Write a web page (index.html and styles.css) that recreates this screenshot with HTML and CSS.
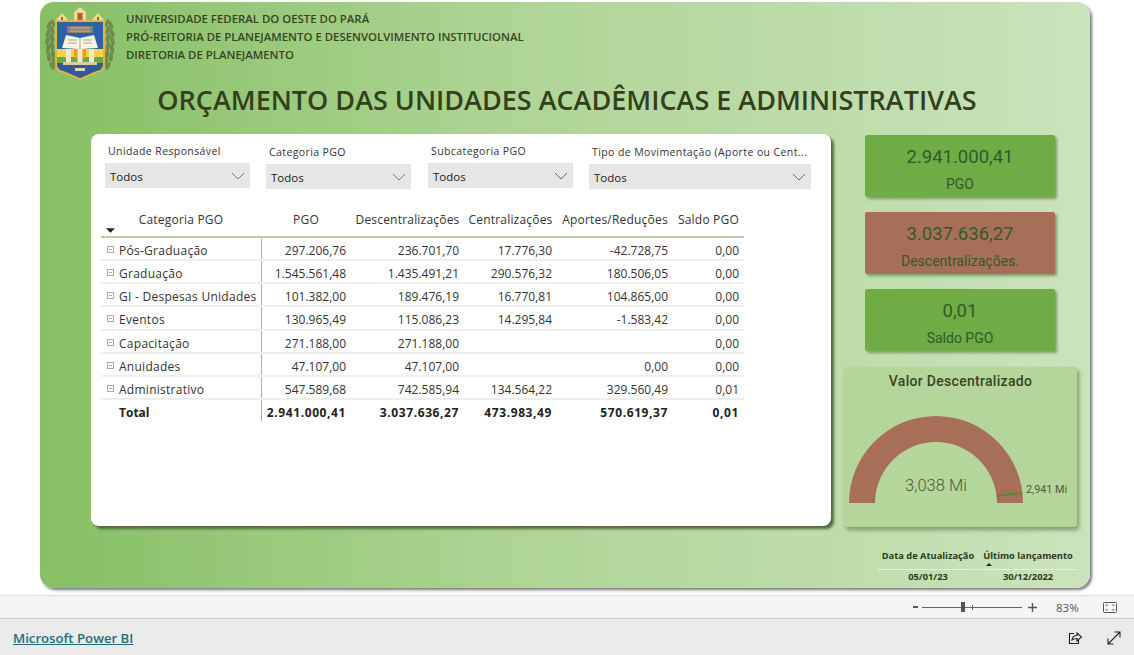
FILE: index.html
```html
<!DOCTYPE html>
<html>
<head>
<title>Orçamento das Unidades</title>
<link rel="stylesheet" href="styles.css">
</head>
<body>
<div class="stage">
<div class="report">
<div class="head">
<svg class="logo" viewBox="0 0 70 74">
<g fill="#6e8b4c">
<ellipse cx="8" cy="16" rx="1.800" ry="4" transform="rotate(-20 8 16)"/><ellipse cx="4" cy="18" rx="1.800" ry="4" transform="rotate(20 4 18)"/>
<ellipse cx="7" cy="23" rx="2" ry="4.500" transform="rotate(-20 7 23)"/><ellipse cx="3" cy="26" rx="2" ry="4.500" transform="rotate(20 3 26)"/>
<ellipse cx="7" cy="31" rx="2" ry="4.500" transform="rotate(-15 7 31)"/><ellipse cx="2.500" cy="34" rx="2" ry="4.500" transform="rotate(15 2.500 34)"/>
<ellipse cx="7" cy="39" rx="2" ry="4.500" transform="rotate(-15 7 39)"/><ellipse cx="3" cy="42" rx="2" ry="4.500" transform="rotate(10 3 42)"/>
<ellipse cx="8" cy="47" rx="2" ry="4.500" transform="rotate(-10 8 47)"/><ellipse cx="4" cy="50" rx="2" ry="4.500" transform="rotate(-5 4 50)"/>
<ellipse cx="9" cy="55" rx="2" ry="4.500" transform="rotate(-20 9 55)"/><ellipse cx="7" cy="59" rx="2" ry="4" transform="rotate(-25 7 59)"/>
<ellipse cx="62" cy="16" rx="1.800" ry="4" transform="rotate(20 62 16)"/><ellipse cx="66" cy="18" rx="1.800" ry="4" transform="rotate(-20 66 18)"/>
<ellipse cx="63" cy="23" rx="2" ry="4.500" transform="rotate(20 63 23)"/><ellipse cx="67" cy="26" rx="2" ry="4.500" transform="rotate(-20 67 26)"/>
<ellipse cx="63" cy="31" rx="2" ry="4.500" transform="rotate(15 63 31)"/><ellipse cx="67.500" cy="34" rx="2" ry="4.500" transform="rotate(-15 67.500 34)"/>
<ellipse cx="63" cy="39" rx="2" ry="4.500" transform="rotate(15 63 39)"/><ellipse cx="67" cy="42" rx="2" ry="4.500" transform="rotate(-10 67 42)"/>
<ellipse cx="62" cy="47" rx="2" ry="4.500" transform="rotate(10 62 47)"/><ellipse cx="66" cy="50" rx="2" ry="4.500" transform="rotate(5 66 50)"/>
<ellipse cx="61" cy="55" rx="2" ry="4.500" transform="rotate(20 61 55)"/><ellipse cx="63" cy="59" rx="2" ry="4" transform="rotate(25 63 59)"/>
</g>
<path d="M35 0l6 5v8H29V5z" fill="#f0d98e"/><path d="M32.500 6h5v7h-5z" fill="#a6603a"/>
<path d="M17 6l6 7H11zM53 6l6 7H47z" fill="#f0d98e"/><path d="M16 10h2v3h-2zM52 10h2v3h-2z" fill="#a6603a"/>
<path d="M10 13h50v44q0 8-8 9l-17 7-17-7q-8-1-8-9z" fill="#e3b63a"/>
<path d="M12 15h46v41q0 7-7 8l-16 7-16-7q-7-1-7-8z" fill="#2c62a8"/>
<path d="M12 42h46v14H12z" fill="#f6d44a"/>
<path d="M12 50h46v7H12z" fill="#6aa84f"/>
<path d="M12 56h46q0 7-7 8l-16 7-16-7q-7-1-7-8z" fill="#2f5a94"/>
<path d="M22 19h26v7H22z" fill="#8b7f70"/><path d="M25 21h20M25 24h20" stroke="#d8cfa8" stroke-width=".7"/>
<path d="M29 39a6 6 0 0 1 12 0v12H29z" fill="#f29a1d"/>
<path d="M17 41l4-13 14 3 14-3 4 13-18 1z" fill="#f7f4e0"/>
<path d="M23 33h9M23 36h9M38 33h9M38 36h9" stroke="#8c8c74" stroke-width=".7"/>
<path d="M35 31v11" stroke="#b7a97a"/>
<path d="M21 42h5v13h-5zM32.500 42h5v13h-5zM44 42h5v13h-5z" fill="#efe9cc"/>
<path d="M18 55h34v3H18z" fill="#d8d0a4"/>
<path d="M30 61h10v3H30z" fill="#d8d7c4"/>
</svg>
<div class="orgs">
<div>UNIVERSIDADE FEDERAL DO OESTE DO PARÁ</div>
<div>PRÓ-REITORIA DE PLANEJAMENTO E DESENVOLVIMENTO INSTITUCIONAL</div>
<div>DIRETORIA DE PLANEJAMENTO</div>
</div>
</div>
<h1 class="title">ORÇAMENTO DAS UNIDADES ACADÊMICAS E ADMINISTRATIVAS</h1>
<div class="main">
<div class="panel">
<div class="slicers">
<div class="slicer s1"><div class="slabel">Unidade Responsável</div><div class="sbox">Todos<svg class="chev" viewBox="0 0 14 8"><path d="M1 1l6 6 6-6" fill="none" stroke="#8a7a3c"/></svg></div></div>
<div class="slicer s1 low"><div class="slabel">Categoria PGO</div><div class="sbox">Todos<svg class="chev" viewBox="0 0 14 8"><path d="M1 1l6 6 6-6" fill="none" stroke="#a8743c"/></svg></div></div>
<div class="slicer s1 wide-gap"><div class="slabel">Subcategoria PGO</div><div class="sbox">Todos<svg class="chev" viewBox="0 0 14 8"><path d="M1 1l6 6 6-6" fill="none" stroke="#3c78a8"/></svg></div></div>
<div class="slicer s2 low"><div class="slabel">Tipo de Movimentação (Aporte ou Cent...</div><div class="sbox">Todos<svg class="chev" viewBox="0 0 14 8"><path d="M1 1l6 6 6-6" fill="none" stroke="#a85050"/></svg></div></div>
</div>
<div class="matrix">
<svg class="sort" viewBox="0 0 10 5"><path d="M0 0h10L5 5z" fill="#222"/></svg>
<table>
<thead>
<tr><th class="cat">Categoria PGO</th><th>PGO</th><th>Descentralizações</th><th>Centralizações</th><th>Aportes/Reduções</th><th>Saldo PGO</th></tr>
</thead>
<tbody>
<tr><td class="cat"><i class="exp"></i>Pós-Graduação</td><td>297.206,76</td><td>236.701,70</td><td>17.776,30</td><td>-42.728,75</td><td>0,00</td></tr>
<tr><td class="cat"><i class="exp"></i>Graduação</td><td>1.545.561,48</td><td>1.435.491,21</td><td>290.576,32</td><td>180.506,05</td><td>0,00</td></tr>
<tr><td class="cat"><i class="exp"></i>GI - Despesas Unidades</td><td>101.382,00</td><td>189.476,19</td><td>16.770,81</td><td>104.865,00</td><td>0,00</td></tr>
<tr class="tall"><td class="cat"><i class="exp"></i>Eventos</td><td>130.965,49</td><td>115.086,23</td><td>14.295,84</td><td>-1.583,42</td><td>0,00</td></tr>
<tr><td class="cat"><i class="exp"></i>Capacitação</td><td>271.188,00</td><td>271.188,00</td><td></td><td></td><td>0,00</td></tr>
<tr><td class="cat"><i class="exp"></i>Anuidades</td><td>47.107,00</td><td>47.107,00</td><td></td><td>0,00</td><td>0,00</td></tr>
<tr><td class="cat"><i class="exp"></i>Administrativo</td><td>547.589,68</td><td>742.585,94</td><td>134.564,22</td><td>329.560,49</td><td>0,01</td></tr>
<tr class="total"><td class="cat"><i class="noexp"></i>Total</td><td>2.941.000,41</td><td>3.037.636,27</td><td>473.983,49</td><td>570.619,37</td><td>0,01</td></tr>
</tbody>
</table>
</div>
</div>
<div class="side">
<div class="card"><div class="num">2.941.000,41</div><div class="cap">PGO</div></div>
<div class="card brown"><div class="num">3.037.636,27</div><div class="cap">Descentralizações.</div></div>
<div class="card"><div class="num">0,01</div><div class="cap">Saldo PGO</div></div>
<div class="gauge">
<div class="gtitle">Valor Descentralizado</div>
<svg class="gsvg" viewBox="0 0 233 130">
<path d="M5 106a87 87 0 0 1 174 0h-26a61 61 0 0 0-122 0z" fill="#a86f58"/>
<path d="M153 99L178 96" stroke="#4f8a32" stroke-width="1.6"/>
<text x="92" y="94" class="gval">3,038 Mi</text>
<text x="182" y="96" class="gtarget">2,941 Mi</text>
</svg>
</div>
<div class="dates">
<div class="dhead">Data de Atualização</div>
<div class="dhead second">Último lançamento<svg class="dsort" viewBox="0 0 6 3"><path d="M0 3h6L3 0z" fill="#222"/></svg></div>
<div class="dval">05/01/23</div>
<div class="dval">30/12/2022</div>
</div>
</div>
</div>
</div>
</div>
<div class="zoombar">
<span class="minus"></span>
<div class="slider"><i class="thumb"></i><i class="mark"></i></div>
<svg class="plus" viewBox="0 0 9 9"><path d="M4.500 0v9M0 4.500h9" stroke="#555" stroke-width="1.400"/></svg>
<span class="pct">83%</span>
<svg class="fit" viewBox="0 0 14 11"><rect x=".5" y=".5" width="13" height="10" rx="1" fill="none" stroke="#555"/><path d="M3 4V3h2M9 3h2v1M11 7v1H9M5 8H3V7" fill="none" stroke="#555" stroke-width=".8"/></svg>
</div>
<div class="footer">
<a class="pbi" href="#">Microsoft Power BI</a>
<div class="ficons">
<svg class="ficon" viewBox="0 0 14 14"><path d="M6 2.500H1.500v10h9V9" fill="none" stroke="#222" stroke-width="1.100"/><path d="M4 9q.5-4.500 5-4.500V2l4.500 4-4.500 4V7.500q-3 0-5 1.500z" fill="none" stroke="#222" stroke-width="1.100"/></svg>
<svg class="ficon" viewBox="0 0 14 14"><path d="M1 13L13 1M7.500 1H13v5.500M1 7.500V13h5.500" fill="none" stroke="#222" stroke-width="1.100"/></svg>
</div>
</div>
</body>
</html>
```

FILE: styles.css
```css
body{
margin:0;
height:655px;
overflow:hidden;
background-color:#fff;
color:#333;
font-family:"Open Sans","Noto Sans",sans-serif;
}
.stage{
height:595px;
box-sizing:border-box;
padding:2px 44px 0 40px;
}
.report{
height:586px;
box-sizing:border-box;
padding:3px 0 0 5px;
border-radius:14px;
background:linear-gradient(90deg,#86bf64 0%,#aed495 45%,#cbe3bd 100%);
box-shadow:2px 2px 3px #777;
}
.head{
display:flex;
height:74px;
}
.logo{
width:70px;
height:74px;
margin:2px 11px 0 0;
}
.orgs{
padding-top:5px;
font-size:11.400px;
font-weight:600;
line-height:18px;
color:#37451f;
white-space:nowrap;
}
.title{
margin:1px 0 0 0;
padding-left:5px;
font-size:27px;
font-weight:600;
line-height:40px;
color:#343f1b;
text-align:center;
width:1034px;
white-space:nowrap;
}
.main{
display:flex;
margin:14px 0 0 46px;
}
.panel{
width:740px;
height:392px;
background-color:#fff;
border-radius:8px;
box-shadow:3px 3px 3px #4f6b3c;
box-sizing:border-box;
padding:8px 0 0 14px;
}
.slicers{
display:flex;
height:47px;
}
.slicer{
margin-right:16px;
}
.s1{width:145px;}
.s2{width:222px;}
.low{margin-top:1px;}
.wide-gap{margin-left:1px;}
.slabel{
height:21px;
padding-left:3px;
font-size:10.500px;
line-height:18px;
letter-spacing:.4px;
color:#333;
white-space:nowrap;
}
.sbox{
display:flex;
justify-content:space-between;
align-items:center;
height:25px;
padding:2px 4px 0 5px;
box-sizing:border-box;
background-color:#e6e6e6;
font-size:11.500px;
color:#222;
}
.chev{
width:14px;
height:8px;
margin:-2px 1px 0 0;
}
.matrix{
position:relative;
margin:11px 0 0 -4px;
}
.sort{
position:absolute;
left:5px;
top:28px;
width:9px;
height:5px;
}
table{
border-collapse:collapse;
table-layout:fixed;
width:643px;
}
th{
height:32px;
padding:4px 0 0 0;
font-size:12px;
font-weight:400;
line-height:32px;
letter-spacing:.2px;
text-align:center;
color:#333;
white-space:nowrap;
border-bottom:2px solid #b9cfa9;
}
th:nth-child(1){width:160px;}
th:nth-child(2){width:90px;}
th:nth-child(3){width:113px;}
th:nth-child(4){width:93px;}
th:nth-child(5){width:116px;}
th:nth-child(6){width:71px;}
td{
height:17px;
padding:4px 5px 0 0;
font-size:12px;
line-height:17px;
text-align:right;
vertical-align:top;
color:#333;
white-space:nowrap;
border-bottom:2px solid #eee;
}
td.cat{
text-align:left;
padding-left:6px;
letter-spacing:.27px;
border-right:1px solid #a9b899;
}
.tall td{height:18px;}
.exp{
display:inline-block;
width:5px;
height:5px;
margin:0 5px 2px 0;
border:1px solid #aaa;
background:linear-gradient(#aaa,#aaa) center/3px 1px no-repeat;
}
.noexp{
display:inline-block;
width:7px;
margin-right:5px;
}
.total td{
font-weight:700;
color:#222;
letter-spacing:.6px;
border-bottom:none;
}
.total td.cat{letter-spacing:0;}
.side{
width:233px;
margin:1px 0 0 13px;
}
.card{
width:190px;
height:62px;
margin:0 0 15px 21px;
box-sizing:border-box;
padding-top:9px;
background-color:#6fac45;
border-radius:2px;
box-shadow:2px 2px 3px #7d9c68;
color:#2f5a2c;
text-align:center;
font-family:Roboto,"Liberation Sans",sans-serif;
}
.brown{background-color:#a86f58;}
.num{
font-size:18.500px;
line-height:26px;
}
.cap{
font-size:14px;
line-height:28px;
}
.gauge{
height:160px;
margin-top:16px;
background-color:#b5d69b;
border-radius:3px;
box-shadow:2px 3px 4px #7d9c68;
}
.gtitle{
height:30px;
font-family:Roboto,"Liberation Sans",sans-serif;
font-size:14px;
font-weight:500;
line-height:28px;
letter-spacing:.3px;
text-align:center;
color:#37451f;
}
.gsvg{
display:block;
width:233px;
height:130px;
}
.gval{
font-family:Roboto,sans-serif;
font-weight:300;
font-size:16.500px;
fill:#4a5a3a;
text-anchor:middle;
}
.gtarget{
font-family:Roboto,sans-serif;
font-size:10.800px;
fill:#4a5a3a;
}
.dates{
display:grid;
grid-template-columns:100px 100px;
margin:22px 0 0 34px;
width:200px;
font-size:9.300px;
font-weight:700;
color:#2c3a1c;
}
.dhead{
position:relative;
height:20px;
line-height:14px;
text-align:center;
white-space:nowrap;
border-bottom:1px solid #e6f0df;
}
.dsort{
position:absolute;
left:8px;
top:14px;
width:6px;
height:3px;
}
.dval{
line-height:14px;
text-align:center;
}
.zoombar{
display:flex;
align-items:center;
height:22px;
border-top:1px solid #ddd;
border-bottom:1px solid #ccc;
background-color:#f5f5f5;
padding-left:913px;
}
.minus{
width:5px;
height:2px;
background-color:#555;
margin-right:4px;
}
.slider{
position:relative;
width:100px;
height:1px;
background-color:#666;
margin-right:6px;
}
.thumb{
position:absolute;
left:39px;
top:-5px;
width:4px;
height:10px;
background-color:#555;
}
.mark{
position:absolute;
left:50px;
top:-2px;
width:1px;
height:5px;
background-color:#666;
}
.plus{
width:9px;
height:9px;
margin-right:19px;
}
.pct{
width:24px;
font-size:11.500px;
color:#555;
margin-right:23px;
}
.fit{
width:14px;
height:11px;
}
.footer{
display:flex;
justify-content:space-between;
align-items:center;
height:37px;
padding:0 13px;
background-color:#eaeaea;
}
.pbi{
font-size:13.200px;
font-weight:600;
color:#1f6e79;
}
.ficons{
display:flex;
gap:25px;
}
.ficon{
width:14px;
height:14px;
}
```
